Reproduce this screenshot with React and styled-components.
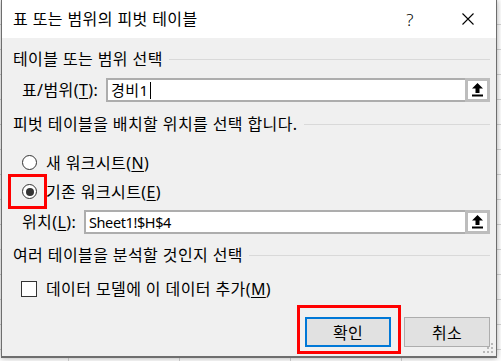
import React from 'react'
import styled, { createGlobalStyle } from 'styled-components';

const Global = createGlobalStyle`
    html, body {
        margin: 0;
        padding: 0;
        width: 501px;
        height: 361px;
        overflow: hidden;
        background-color: #ffffff;
        background-image:
            repeating-linear-gradient(to right, transparent 0 68px, #d4d4d4 68px 69px, transparent 69px 111px),
            repeating-linear-gradient(to bottom, transparent 0 24px, #d4d4d4 24px 25px);
        font-family: "Noto Sans", "Noto Sans CJK KR", sans-serif;
        color: #000;
    }
`;

const Dialog = styled.div`
    position: relative;
    box-sizing: border-box;
    width: 496px;
    height: 358px;
    margin-left: 1px;
    border: 1px solid #6e6e6e;
    border-top: none;
    border-bottom-width: 2px;
    background: #f0f0f0;
    display: flex;
    flex-direction: column;
    box-shadow: 0 0 6px rgba(0, 0, 0, 0.35);
`;

const TitleBar = styled.div`
    height: 38px;
    background: #ffffff;
    display: flex;
    align-items: center;
    padding: 0 5px 0 11px;
    font-size: 16px;
    letter-spacing: 0.4px;
`;

const Title = styled.span`
    flex: 1;
    line-height: 20px;
`;

const TitleButton = styled.div`
    width: ${props => props.$w}px;
    height: 38px;
    display: flex;
    align-items: center;
    justify-content: center;
    margin-left: ${props => props.$gap || 0}px;
    font-size: 17px;
    font-weight: 300;
`;

const Body = styled.div`
    flex: 1;
    display: flex;
    flex-direction: column;
    padding: 0 6px 0 11px;
    font-size: 16px;
    letter-spacing: 0.4px;
`;

const Heading = styled.div`
    margin-top: ${props => props.$mt}px;
    height: 20px;
    line-height: 20px;
    display: flex;
    align-items: center;

    &::after {
        content: "";
        flex: 1;
        height: 1px;
        margin-left: 6px;
        background: #d9d9d9;
    }
`;

const FieldRow = styled.div`
    margin-top: ${props => props.$mt}px;
    padding-left: 9px;
    height: 24px;
    display: flex;
    align-items: center;
`;

const Label = styled.span`
    width: ${props => props.$w}px;
    line-height: 20px;
    white-space: nowrap;
`;

const Input = styled.div`
    flex: 1;
    box-sizing: border-box;
    height: 24px;
    border: 2px solid #adadad;
    border-right: none;
    background: #fff;
    display: flex;
    align-items: center;
`;

const InputText = styled.span`
    flex: 1;
    padding-left: 3px;
    line-height: 20px;
    display: flex;
    align-items: center;
    font-size: ${props => props.$size || 15}px;
    letter-spacing: ${props => props.$ls || 0}px;
`;

const Caret = styled.span`
    display: inline-block;
    width: 1px;
    height: 17px;
    margin-left: 1px;
    background: #000;
`;

const RefButton = styled.div`
    box-sizing: border-box;
    width: 25px;
    height: 24px;
    margin-top: -2px;
    margin-bottom: -2px;
    border: 3px solid #bdbdbd;
    background: #fff;
    display: flex;
    align-items: center;
    justify-content: center;
`;

const OptionRow = styled.div`
    margin-top: ${props => props.$mt}px;
    padding-left: ${props => props.$pl}px;
    height: 21px;
    display: flex;
    align-items: center;
    line-height: 20px;
`;

const Radio = styled.span`
    position: relative;
    box-sizing: border-box;
    width: 15px;
    height: 15px;
    margin-right: 9px;
    border: 1px solid #333;
    border-radius: 50%;
    background: #fff;
    display: flex;
    align-items: center;
    justify-content: center;

    &::before {
        content: "";
        display: ${props => props.$checked ? 'block' : 'none'};
        width: 8px;
        height: 8px;
        border-radius: 50%;
        background: #333;
    }
`;

const Checkbox = styled.span`
    box-sizing: border-box;
    width: 16px;
    height: 16px;
    margin-right: 9px;
    border: 1px solid #333;
    background: #fff;
`;

const Mark = styled.span`
    position: absolute;
    left: ${props => props.$l}px;
    top: ${props => props.$t}px;
    width: ${props => props.$w}px;
    height: ${props => props.$h}px;
    box-sizing: border-box;
    border: 3px solid #ff0000;
    pointer-events: none;
`;

const U = styled.span`
    text-decoration: underline;
    text-underline-offset: 2px;
`;

const Footer = styled.div`
    margin-top: 18px;
    display: flex;
    justify-content: flex-end;
    gap: 13px;
`;

const ButtonWrap = styled.div`
    position: relative;
`;

const Button = styled.div`
    box-sizing: border-box;
    width: 86px;
    height: 30px;
    background: #e1e1e1;
    border: ${props => props.$primary ? '2px solid #0078d7' : '1px solid #adadad'};
    display: flex;
    align-items: center;
    justify-content: center;
    font-size: 16px;
    letter-spacing: 0.4px;
`;

const Grip = styled.svg`
    position: absolute;
    right: 1px;
    bottom: 1px;
`;

function UploadIcon() {
    return (
        <svg width="11" height="14" viewBox="0 0 11 14">
            <polygon points="5.5,0 11,5.5 7.5,5.5 7.5,10 3.5,10 3.5,5.5 0,5.5" fill="#000" />
            <rect x="0" y="11.5" width="11" height="2" fill="#000" />
        </svg>
    );
}

function CloseIcon() {
    return (
        <svg width="12" height="12" viewBox="0 0 12 12">
            <path d="M0.5 0.5 L11.5 11.5 M11.5 0.5 L0.5 11.5" stroke="#000" strokeWidth="1.1" />
        </svg>
    );
}

function App() {
    return (
        <>
            <Global />
            <Dialog>
                <TitleBar>
                    <Title>표 또는 범위의 피벗 테이블</Title>
                    <TitleButton $w={30}>?</TitleButton>
                    <TitleButton $w={46} $gap={20}><CloseIcon /></TitleButton>
                </TitleBar>
                <Body>
                    <Heading $mt={11}>테이블 또는 범위 선택</Heading>
                    <FieldRow $mt={9}>
                        <Label $w={84}>표/범위(<U>T</U>):</Label>
                        <Input>
                            <InputText $ls={0.5}>경비1<Caret /></InputText>
                            <RefButton><UploadIcon /></RefButton>
                        </Input>
                    </FieldRow>

                    <Heading $mt={12}>피벗 테이블을 배치할 위치를 선택 합니다.</Heading>
                    <OptionRow $mt={18} $pl={9}>
                        <Radio />새 워크시트(<U>N</U>)
                    </OptionRow>
                    <OptionRow $mt={8} $pl={9}>
                        <Radio $checked>
                            <Mark $l={-15} $t={-11} $w={39} $h={35} />
                        </Radio>
                        기존 워크시트(<U>E</U>)
                    </OptionRow>
                    <FieldRow $mt={8}>
                        <Label $w={62}>위치(<U>L</U>):</Label>
                        <Input>
                            <InputText $size={14.5} $ls={-0.4}>Sheet1!$H$4</InputText>
                            <RefButton><UploadIcon /></RefButton>
                        </Input>
                    </FieldRow>

                    <Heading $mt={11}>여러 테이블을 분석할 것인지 선택</Heading>
                    <OptionRow $mt={13} $pl={8}>
                        <Checkbox />데이터 모델에 이 데이터 추가(<U>M</U>)
                    </OptionRow>

                    <Footer>
                        <ButtonWrap>
                            <Button $primary>확인</Button>
                            <Mark $l={-8} $t={-12} $w={104} $h={49} />
                        </ButtonWrap>
                        <Button>취소</Button>
                    </Footer>
                </Body>
                <Grip width="12" height="12" viewBox="0 0 12 12">
                    <rect x="8" y="0" width="2" height="2" fill="#b8b8b8" />
                    <rect x="4" y="4" width="2" height="2" fill="#b8b8b8" />
                    <rect x="8" y="4" width="2" height="2" fill="#b8b8b8" />
                    <rect x="0" y="8" width="2" height="2" fill="#b8b8b8" />
                    <rect x="4" y="8" width="2" height="2" fill="#b8b8b8" />
                    <rect x="8" y="8" width="2" height="2" fill="#b8b8b8" />
                </Grip>
            </Dialog>
        </>
    );
}

export default App;
